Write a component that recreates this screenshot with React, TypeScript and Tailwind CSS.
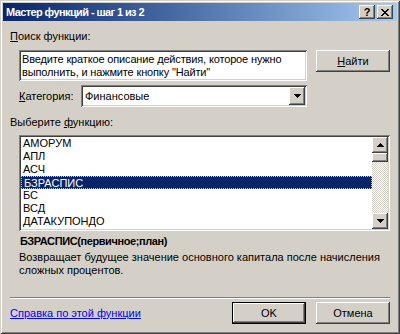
const functions = ["АМОРУМ", "АПЛ", "АСЧ", "БЗРАСПИС", "БС", "ВСД", "ДАТАКУПОНДО"];

const raised =
  "shadow-[inset_-1px_-1px_#404040,inset_1px_1px_#ffffff,inset_-2px_-2px_#808080,inset_2px_2px_#d4d0c8]";
const sunken =
  "shadow-[inset_1px_1px_#808080,inset_-1px_-1px_#ffffff,inset_2px_2px_#404040,inset_-2px_-2px_#d4d0c8]";

function Arrow({ up }: { up?: boolean }) {
  const rows = up ? [3, 2, 1, 0] : [0, 1, 2, 3];
  return (
    <svg width="7" height="4" viewBox="0 0 7 4" shapeRendering="crispEdges" className="block">
      {rows.map((inset, i) => (
        <rect key={i} x={inset} y={i} width={7 - inset * 2} height={1} fill="#000" />
      ))}
    </svg>
  );
}

function CaptionButton({ children }: { children: React.ReactNode }) {
  return (
    <div className={`flex h-[14px] w-[16px] items-center justify-center bg-[#d4d0c8] ${raised}`}>
      {children}
    </div>
  );
}

function PushButton({ children, isDefault }: { children: React.ReactNode; isDefault?: boolean }) {
  return (
    <button
      type="button"
      className={`flex h-[22px] w-[74px] items-center justify-center bg-[#d4d0c8] ${
        isDefault ? "border border-black" : ""
      } ${raised}`}
    >
      {children}
    </button>
  );
}

export default function App() {
  return (
    <div className="h-[334px] w-[400px] overflow-hidden bg-[#d4d0c8] p-[3px] font-['Liberation_Sans',Arial,sans-serif] text-[11px] leading-[13px] text-black shadow-[inset_1px_1px_#d4d0c8,inset_-1px_-1px_#404040,inset_2px_2px_#ffffff,inset_-2px_-2px_#808080]">
      <div className="flex h-[18px] items-center justify-between bg-linear-to-r from-[#0a246a] to-[#a6caf0] pl-[3px] pr-[4px]">
        <span className="font-bold tracking-[-0.6px] text-white">Мастер функций - шаг 1 из 2</span>
        <div className="flex gap-[2px]">
          <CaptionButton>
            <span className="text-[11px] font-bold leading-none">?</span>
          </CaptionButton>
          <CaptionButton>
            <svg width="8" height="7" viewBox="0 0 8 7" shapeRendering="crispEdges">
              <path d="M0 0h2v1H0zM6 0h2v1H6zM1 1h2v1H1zM5 1h2v1H5zM2 2h4v1H2zM3 3h2v1H3zM2 4h4v1H2zM1 5h2v1H1zM5 5h2v1H5zM0 6h2v1H0zM6 6h2v1H6z" fill="#000" />
            </svg>
          </CaptionButton>
        </div>
      </div>

      <div className="px-[7px]">
        <div className="mt-[9px]">
          <u>П</u>оиск функции:
        </div>

        <div className="mt-[7px] flex items-start gap-[9px] pl-[9px]">
          <div className={`h-[31px] w-[288px] bg-white px-[3px] pt-[3px] tracking-[-0.15px] ${sunken}`}>
            <div className="leading-[13px]">Введите краткое описание действия, которое нужно</div>
            <div className="leading-[13px]">выполнить, и нажмите кнопку "Найти"</div>
          </div>
          <PushButton>
            <span>
              <u>Н</u>айти
            </span>
          </PushButton>
        </div>

        <div className="mt-[4px] flex items-center pl-[9px]">
          <span className="w-[62px]">
            <u>К</u>атегория:
          </span>
          <div className={`flex h-[22px] w-[226px] items-center justify-between bg-white pl-[4px] pr-[2px] ${sunken}`}>
            <span>Финансовые</span>
            <div className={`flex h-[18px] w-[16px] items-center justify-center bg-[#d4d0c8] ${raised}`}>
              <Arrow />
            </div>
          </div>
        </div>

        <div className="mt-[9px]">
          Выберите <u>ф</u>ункцию:
        </div>

        <div className={`ml-[9px] mt-[6px] flex h-[96px] w-[371px] bg-white p-[2px] ${sunken}`}>
          <div className="flex-1 overflow-hidden">
            {functions.map((name) => (
              <div
                key={name}
                className={`h-[13px] px-[2px] leading-[13px] ${
                  name === "БЗРАСПИС"
                    ? "border border-dotted border-[#e8c860] bg-[#0a246a] px-[1px] leading-[11px] text-white"
                    : ""
                }`}
              >
                {name}
              </div>
            ))}
          </div>
          <div className="flex w-[16px] flex-col">
            <div className={`flex h-[16px] items-center justify-center bg-[#d4d0c8] ${raised}`}>
              <Arrow up />
            </div>
            <div className="flex-1 bg-[repeating-conic-gradient(#d4d0c8_0_25%,#ffffff_0_50%)] bg-[length:2px_2px]">
              <div className={`h-[9px] bg-[#d4d0c8] ${raised}`} />
            </div>
            <div className={`flex h-[16px] items-center justify-center bg-[#d4d0c8] ${raised}`}>
              <Arrow />
            </div>
          </div>
        </div>

        <div className="mt-[4px] pl-[10px] font-bold tracking-[-0.4px]">БЗРАСПИС(первичное;план)</div>
        <div className="mt-[3px] pl-[9px]">
          Возвращает будущее значение основного капитала после начисления
          <br />
          сложных процентов.
        </div>

        <div className="mt-[20px] border-t border-b border-t-[#808080] border-b-white" />

        <div className="mt-[3px] flex items-center justify-between">
          <a href="#" className="text-[#0000ff] underline">
            Справка по этой функции
          </a>
          <div className="flex gap-[10px]">
            <PushButton isDefault>OK</PushButton>
            <PushButton>Отмена</PushButton>
          </div>
        </div>
      </div>
    </div>
  );
}
